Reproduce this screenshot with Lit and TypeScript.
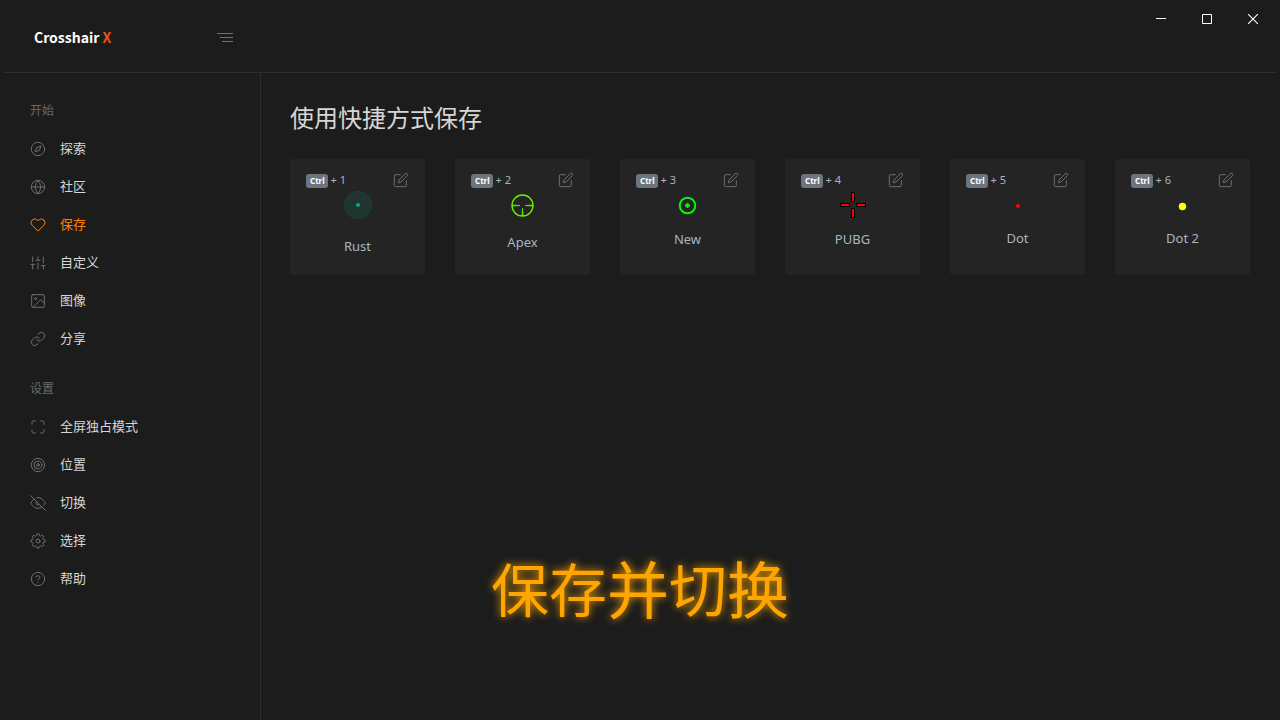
import { LitElement, html, svg, css, SVGTemplateResult } from "lit";
import { customElement, property } from "lit/decorators.js";
import { classMap } from "lit/directives/class-map.js";

interface NavItem {
  label: string;
  icon: SVGTemplateResult;
  active?: boolean;
}

interface Preset {
  name: string;
  key: number;
  height: number;
  art: SVGTemplateResult;
}

const START: NavItem[] = [
  {
    label: "探索",
    icon: svg`<circle cx="12" cy="12" r="10"/><polygon points="16.24 7.76 14.12 14.12 7.76 16.24 9.88 9.88 16.24 7.76"/>`,
  },
  {
    label: "社区",
    icon: svg`<circle cx="12" cy="12" r="10"/><line x1="2" y1="12" x2="22" y2="12"/><path d="M12 2a15.3 15.3 0 0 1 4 10 15.3 15.3 0 0 1-4 10 15.3 15.3 0 0 1-4-10 15.3 15.3 0 0 1 4-10z"/>`,
  },
  {
    label: "保存",
    active: true,
    icon: svg`<path d="M20.84 4.61a5.5 5.5 0 0 0-7.78 0L12 5.67l-1.06-1.06a5.5 5.5 0 0 0-7.78 7.78l1.06 1.06L12 21.23l7.78-7.78 1.06-1.06a5.5 5.5 0 0 0 0-7.78z"/>`,
  },
  {
    label: "自定义",
    icon: svg`<line x1="4" y1="21" x2="4" y2="14"/><line x1="4" y1="10" x2="4" y2="3"/><line x1="12" y1="21" x2="12" y2="12"/><line x1="12" y1="8" x2="12" y2="3"/><line x1="20" y1="21" x2="20" y2="16"/><line x1="20" y1="12" x2="20" y2="3"/><line x1="1" y1="14" x2="7" y2="14"/><line x1="9" y1="8" x2="15" y2="8"/><line x1="17" y1="16" x2="23" y2="16"/>`,
  },
  {
    label: "图像",
    icon: svg`<rect x="2.5" y="2.5" width="19" height="19" rx="2"/><circle cx="8.5" cy="8.5" r="1.5"/><polyline points="21 15 16 10 5 21"/>`,
  },
  {
    label: "分享",
    icon: svg`<path d="M10 13a5 5 0 0 0 7.54.54l3-3a5 5 0 0 0-7.07-7.07l-1.72 1.71"/><path d="M14 11a5 5 0 0 0-7.54-.54l-3 3a5 5 0 0 0 7.07 7.07l1.71-1.71"/>`,
  },
];

const SETTINGS: NavItem[] = [
  {
    label: "全屏独占模式",
    icon: svg`<path d="M8 3H5a2 2 0 0 0-2 2v3m18 0V5a2 2 0 0 0-2-2h-3m0 18h3a2 2 0 0 0 2-2v-3M3 16v3a2 2 0 0 0 2 2h3"/>`,
  },
  {
    label: "位置",
    icon: svg`<circle cx="12" cy="12" r="10"/><circle cx="12" cy="12" r="6"/><circle cx="12" cy="12" r="2"/>`,
  },
  {
    label: "切换",
    icon: svg`<path d="M17.94 17.94A10.07 10.07 0 0 1 12 20c-7 0-11-8-11-8a18.45 18.45 0 0 1 5.06-5.94M9.9 4.24A9.12 9.12 0 0 1 12 4c7 0 11 8 11 8a18.5 18.5 0 0 1-2.16 3.19m-6.72-1.07a3 3 0 1 1-4.24-4.24"/><line x1="1" y1="1" x2="23" y2="23"/>`,
  },
  {
    label: "选择",
    icon: svg`<circle cx="12" cy="12" r="3"/><path d="M19.4 15a1.65 1.65 0 0 0 .33 1.82l.06.06a2 2 0 0 1 0 2.83 2 2 0 0 1-2.83 0l-.06-.06a1.65 1.65 0 0 0-1.82-.33 1.65 1.65 0 0 0-1 1.51V21a2 2 0 0 1-2 2 2 2 0 0 1-2-2v-.09A1.65 1.65 0 0 0 9 19.4a1.65 1.65 0 0 0-1.82.33l-.06.06a2 2 0 0 1-2.83 0 2 2 0 0 1 0-2.83l.06-.06a1.65 1.65 0 0 0 .33-1.82 1.65 1.65 0 0 0-1.51-1H3a2 2 0 0 1-2-2 2 2 0 0 1 2-2h.09A1.65 1.65 0 0 0 4.6 9a1.65 1.65 0 0 0-.33-1.82l-.06-.06a2 2 0 0 1 0-2.83 2 2 0 0 1 2.83 0l.06.06a1.65 1.65 0 0 0 1.82.33H9a1.65 1.65 0 0 0 1-1.51V3a2 2 0 0 1 2-2 2 2 0 0 1 2 2v.09a1.65 1.65 0 0 0 1 1.51 1.65 1.65 0 0 0 1.82-.33l.06-.06a2 2 0 0 1 2.83 0 2 2 0 0 1 0 2.83l-.06.06a1.65 1.65 0 0 0-.33 1.82V9a1.65 1.65 0 0 0 1.51 1H21a2 2 0 0 1 2 2 2 2 0 0 1-2 2h-.09a1.65 1.65 0 0 0-1.51 1z"/>`,
  },
  {
    label: "帮助",
    icon: svg`<circle cx="12" cy="12" r="10"/><path d="M9.09 9a3 3 0 0 1 5.83 1c0 2-3 3-3 3"/><line x1="12" y1="17" x2="12.01" y2="17"/>`,
  },
];

const PRESETS: Preset[] = [
  {
    name: "Rust",
    key: 1,
    height: 41,
    art: svg`<circle cx="20" cy="14" r="13.7" fill="#20352f" stroke="#1c4438" stroke-width="0.8"/><circle cx="20" cy="14" r="2" fill="#12a57c"/>`,
  },
  {
    name: "Apex",
    key: 2,
    height: 37,
    art: svg`<circle cx="19.5" cy="14.5" r="10.5" fill="none" stroke="#66f000" stroke-width="1.3"/><path d="M9 14l8 .5-8 .6zM30 14l-8 .5 8 .6zM19 25l.5-8 .6 8z" fill="#66f000" stroke="#66f000" stroke-width=".7"/>`,
  },
  {
    name: "New",
    key: 3,
    height: 34,
    art: svg`<circle cx="19.5" cy="14.5" r="7.8" fill="none" stroke="#0f0" stroke-width="1.9"/><path d="M18.5 12h2v1.500h1.500v2h-1.500V17h-2v-1.500H17v-2h1.500z" fill="#0f0"/>`,
  },
  {
    name: "PUBG",
    key: 4,
    height: 34,
    art: svg`<path d="M18 1h4v10h-4zM18 17h4v10h-4zM7 12h10v4H7zM23 12h10v4H23z"/><path d="M19 2h2v8h-2zM19 18h2v8h-2zM8 13h8v2H8zM24 13h8v2H24z" fill="#f00"/>`,
  },
  {
    name: "Dot",
    key: 5,
    height: 33,
    art: svg`<circle cx="20" cy="15" r="2.1" fill="#f00"/>`,
  },
  {
    name: "Dot 2",
    key: 6,
    height: 33,
    art: svg`<circle cx="19.5" cy="15.5" r="3.7" fill="#ff0"/>`,
  },
];

@customElement("preset-card")
class PresetCard extends LitElement {
  @property({ attribute: false }) preset!: Preset;

  static styles = css`
    :host {
      display: block;
      box-sizing: border-box;
      min-height: 116px;
      padding: 13px 16px 15px;
      border-radius: 3px;
      background: #242424;
      color: #a9b4c0;
    }
    .bar {
      display: flex;
      justify-content: space-between;
      height: 19px;
    }
    .shortcut {
      display: flex;
      gap: 3px;
      font-size: 11px;
      line-height: 16px;
    }
    .key {
      height: 14px;
      margin-top: 2px;
      padding: 0 3px 0 4px;
      border-radius: 3px;
      background: #6c757d;
      color: #fff;
      font: 700 8px/14px "Noto Sans", sans-serif;
    }
    .edit {
      display: flex;
      align-self: flex-start;
      padding: 0;
      border: 0;
      background: none;
      color: #6e6e6e;
    }
    .art {
      display: block;
      margin: 0 auto;
    }
    .name {
      font-size: 13px;
      line-height: 28px;
      text-align: center;
    }
  `;

  render() {
    const p = this.preset;
    return html`
      <div class="bar">
        <div class="shortcut"><kbd class="key">Ctrl</kbd><span>+ ${p.key}</span></div>
        <button class="edit" aria-label="编辑 ${p.name}">
          <svg width="16" height="16" viewBox="0 0 24 24" fill="none" stroke="currentColor" stroke-width="1.5" stroke-linecap="round" stroke-linejoin="round">
            <path d="M11 4H4a2 2 0 0 0-2 2v14a2 2 0 0 0 2 2h14a2 2 0 0 0 2-2v-7" />
            <path d="M18.5 2.5a2.121 2.121 0 0 1 3 3L12 15l-4 1 1-4 9.5-9.5z" />
          </svg>
        </button>
      </div>
      <svg class="art" width="40" height=${p.height} viewBox="0 0 40 ${p.height}">${p.art}</svg>
      <div class="name">${p.name}</div>
    `;
  }
}

@customElement("app-root")
class AppRoot extends LitElement {
  static styles = css`
    :host {
      position: relative;
      display: flex;
      flex-direction: column;
      box-sizing: border-box;
      min-height: 100vh;
      background: #1c1c1c;
      color: #d6d6d6;
      font-family: "Noto Sans", "Noto Sans CJK SC", sans-serif;
    }
    .header {
      display: flex;
      justify-content: space-between;
      align-items: flex-start;
      height: 72px;
      margin: 0 4px;
      border-bottom: 1px solid #2d2d2d;
    }
    .brand {
      display: flex;
      align-items: center;
      justify-content: space-between;
      box-sizing: border-box;
      width: 229px;
      height: 74px;
      padding-left: 30px;
    }
    .logo {
      color: #fff;
      font: 700 14px/20px "Noto Sans CJK SC", sans-serif;
      text-decoration: none;
    }
    .x {
      color: #e2561c;
    }
    .plain {
      display: flex;
      align-items: center;
      justify-content: center;
      padding: 0;
      border: 0;
      background: none;
      color: #707070;
    }
    .window {
      display: flex;
    }
    .control {
      width: 46px;
      height: 38px;
      color: #fff;
    }
    .body {
      display: flex;
      flex: 1;
    }
    .side {
      flex: none;
      box-sizing: border-box;
      width: 261px;
      padding: 28px 30px 30px;
      border-right: 1px solid #2d2d2d;
    }
    .label {
      margin: 0 0 9px;
      color: #6a6a6a;
      font-size: 12px;
      font-weight: 400;
      line-height: 20px;
    }
    .list {
      margin: 0 0 21px;
      padding: 0;
      list-style: none;
    }
    .link {
      display: flex;
      align-items: center;
      gap: 14px;
      height: 38px;
      color: #d6d6d6;
      font-size: 13px;
      line-height: 18px;
      text-decoration: none;
    }
    .text {
      padding-bottom: 2px;
    }
    .icon {
      color: #6e6e6e;
    }
    .active,
    .active .icon {
      color: #ff8000;
    }
    .main {
      flex: 1;
      min-width: 0;
      padding: 27px 30px 30px 29px;
    }
    .title {
      margin: 0 0 23px;
      font-size: 24px;
      font-weight: 400;
      line-height: 36px;
    }
    .grid {
      display: grid;
      grid-template-columns: repeat(auto-fill, minmax(130px, 1fr));
      gap: 30px;
    }
    .caption {
      position: absolute;
      right: 0;
      bottom: 85px;
      left: 0;
      display: flex;
      align-items: center;
      justify-content: center;
      margin: 0;
      color: #ffa500;
      font-size: 58px;
      line-height: 90px;
      text-shadow: 0 0 8px #ffa500;
      pointer-events: none;
    }
    .large {
      font-size: 62px;
    }
  `;

  private list(label: string, items: NavItem[]) {
    return html`
      <h2 class="label">${label}</h2>
      <ul class="list">
        ${items.map(
          (item) => html`<li>
            <a href="#" class=${classMap({ link: true, active: !!item.active })}>
              <svg class="icon" width="16" height="16" viewBox="0 0 24 24" fill="none" stroke="currentColor" stroke-width="1.5" stroke-linecap="round" stroke-linejoin="round">${item.icon}</svg>
              <span class="text">${item.label}</span>
            </a>
          </li>`
        )}
      </ul>
    `;
  }

  render() {
    return html`
      <header class="header">
        <div class="brand">
          <a class="logo" href="#">Crosshair <span class="x">X</span></a>
          <button class="plain" aria-label="菜单">
            <svg width="16" height="10" viewBox="0 0 16 10" stroke="currentColor"><path d="M0 1.5h16M3 5.5h13M5 9.5h11" /></svg>
          </button>
        </div>
        <div class="window">
          <button class="plain control" aria-label="最小化">
            <svg width="10" height="10" viewBox="0 0 10 10" stroke="currentColor"><path d="M0 4.5h10" /></svg>
          </button>
          <button class="plain control" aria-label="最大化">
            <svg width="10" height="10" viewBox="0 0 10 10" fill="none" stroke="currentColor"><path d="M.5.5h9v9h-9z" /></svg>
          </button>
          <button class="plain control" aria-label="关闭">
            <svg width="10" height="10" viewBox="0 0 10 10" stroke="currentColor" stroke-width="1.1"><path d="M0 0l10 10M10 0L0 10" /></svg>
          </button>
        </div>
      </header>
      <div class="body">
        <nav class="side">${this.list("开始", START)}${this.list("设置", SETTINGS)}</nav>
        <main class="main">
          <h1 class="title">使用快捷方式保存</h1>
          <div class="grid">
            ${PRESETS.map((p) => html`<preset-card .preset=${p}></preset-card>`)}
          </div>
        </main>
      </div>
      <p class="caption"><span>保存</span><span class="large">并</span><span>切</span><span class="large">换</span></p>
    `;
  }
}
